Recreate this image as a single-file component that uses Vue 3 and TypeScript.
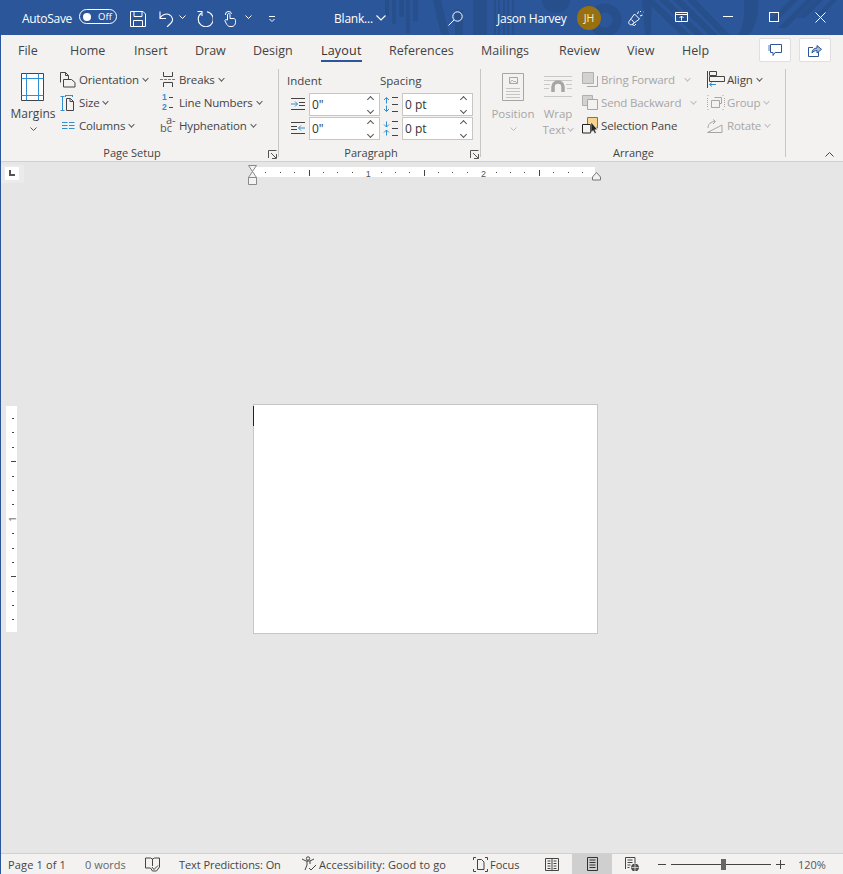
<script setup lang="ts">
const tabs = [
  { label: 'File', w: 52 }, { label: 'Home', w: 64 }, { label: 'Insert', w: 61 },
  { label: 'Draw', w: 58 }, { label: 'Design', w: 68 }, { label: 'Layout', w: 68, active: true },
  { label: 'References', w: 92 }, { label: 'Mailings', w: 78 }, { label: 'Review', w: 68 },
  { label: 'View', w: 55 }, { label: 'Help', w: 40 },
]
const vTicks = [0, 1, 2, 3, 4, 5, 6, 7, 8, 9, 10, 11, 12, 13, 14]
</script>

<template>
  <div class="app">
    <header class="title">
      <svg class="pattern" width="843" height="35" viewBox="0 0 843 35" fill="#264f8c">
        <path d="M385 0h4v16h-4zM392 0h4v24h-4zM399 0h5v17h-5zM406 0h4v33h-4zM413 0h5v21h-5z" />
        <path d="M433 0h8l8 35h-8zM455 10h8v25h-8zM473 0h14v35h-14zM494 0h2v35h-2zM498 0h2v35h-2zM503 0h2v35h-2zM507 0h2v35h-2zM512 0h2v35h-2z" />
        <path d="M542 0h28a14 13 0 0 1-28 0z" />
        <circle cx="605" cy="20" r="12" fill="none" stroke="#264f8c" stroke-width="9" />
        <path d="M642 0h10l-1 35h-6zM654 0l36 35h-9l-36-35zM668 0l36 35h-9l-36-35zM682 0l36 35h-9l-36-35zM696 0l34 35h-9l-34-35z" />
        <path d="M738 35c6-9 7-22 6-35h14c1 14-2 26-9 35z" />
        <path d="M768 22l22-22h8l-22 22zM778 28l28-28h8l-28 28zM797 18l18-18h8l-18 18zM815 16l16-16h6l-16 16z" />
      </svg>
      <span class="autosave">AutoSave</span>
      <span class="toggle"><i></i><b>Off</b></span>
      <svg class="qa save" width="16" height="16" viewBox="0 0 16 16" fill="none" stroke="#fff"><path d="M.5.500h12.500l2.500 2.500v12.500H.5zM4 .5v5h8v-5M3.500 15.500V9.500h9v6" /></svg>
      <svg class="qa undo" width="15" height="16" viewBox="0 0 15 16" fill="none" stroke="#fff" stroke-width="1.100"><path d="M1 .5v7h6M1 7c2-3 6-5 9-3.500 4 2 4.500 6 2 8.500l-4 4" /></svg>
      <svg class="chev cv-undo" width="7" height="4" viewBox="0 0 7 4" fill="none" stroke="#fff"><path d="M.5.500l3 3 3-3" /></svg>
      <svg class="qa redo" width="16" height="17" viewBox="0 0 16 17" fill="none" stroke="#fff" stroke-width="1.100"><path d="M4.500 3A7.500 7.500 0 1 0 10 1.800" /><path d="M.5 1.500h4.500V6" /></svg>
      <svg class="qa touch" width="12" height="16" viewBox="0 0 12 16" fill="none" stroke="#fff"><path d="M3.500 9V3.500a1.300 1.300 0 0 1 2.500 0v4h3a2 2 0 0 1 2.500 2v2c0 2.500-2 4-3.500 4H6c-2 0-3-1.500-4-3.500L1 10c-.5-1 1-2 2-1zM1.500 4a3 3 0 0 1 6-1" /></svg>
      <svg class="chev cv-touch" width="7" height="4" viewBox="0 0 7 4" fill="none" stroke="#fff"><path d="M.5.500l3 3 3-3" /></svg>
      <svg class="qa custom" width="6" height="6" viewBox="0 0 6 6" fill="none" stroke="#fff"><path d="M0 .5h6M.5 3l2.500 2.500L5.500 3" /></svg>
      <span class="doc">Blank...</span>
      <svg class="doc-chev" width="10" height="6" viewBox="0 0 10 6" fill="none" stroke="#fff" stroke-width="1.100"><path d="M.5.500l4.500 4.500 4.500-4.500" /></svg>
      <svg class="search" width="15" height="15" viewBox="0 0 15 15" fill="none" stroke="#fff"><circle cx="9.500" cy="5.500" r="4.700" /><path d="M6 9l-5.500 5.500" /></svg>
      <span class="user">Jason Harvey</span>
      <span class="avatar">JH</span>
      <svg class="feedback" width="16" height="16" viewBox="0 0 16 16" fill="none" stroke="#fff"><path d="M1 11.500L6.500 4l5 5-7.500 5.500c-2 1-4-1-3-3zM4 14.500l2.500 1 1.500-1.500M3.500 9.500l3 3.500M9.500 4l1-2.500M12 6l2.500-1M12.500 1v1M15 2h.5" /></svg>
      <svg class="display" width="13" height="10" viewBox="0 0 13 10" fill="none" stroke="#fff"><path d="M.5.500h12v9H.5zM.5 2.500h12M6.500 8.500V4M4.500 6l2-2 2 2" /></svg>
      <span class="ctl min"></span>
      <span class="ctl max"></span>
      <svg class="ctl-x" width="11" height="11" viewBox="0 0 11 11" fill="none" stroke="#fff"><path d="M.5.500l10 10M10.500.500l-10 10" /></svg>
    </header>

    <nav class="tabs">
      <span v-for="t in tabs" :key="t.label" class="tab" :class="{ on: t.active }" :style="{ width: t.w + 'px' }"><em>{{ t.label }}</em></span>
      <span class="spacer"></span>
      <button class="tb-btn">
        <svg width="14" height="13" viewBox="0 0 14 13" fill="none"><path d="M2.500.500h11v8H7l-2 3v-3H2.500z" stroke="#2b579a" /><path d="M0 1h2v6H0z" fill="#a9bcd8" /></svg>
      </button>
      <button class="tb-btn">
        <svg width="14" height="13" viewBox="0 0 14 13" fill="none" stroke="#2b579a"><path d="M5 3.500H.5v9h10V8" /><path d="M4 9c0-3 2-5 5-5V1.500l4.500 3.800L9 9V6.500C7 6.500 5 7.500 4 9z" fill="#a9bcd8" /></svg>
      </button>
    </nav>

    <section class="ribbon">
      <!-- Page Setup -->
      <div class="group g-page">
        <div class="body page-body">
          <div class="big margins">
            <svg width="24" height="28" viewBox="0 0 24 28" fill="none">
              <path d="M.5.500h22v27H.5z" fill="#fff" stroke="#444" />
              <path d="M.5 5.500h22M.5 22.500h22M5.500.500v27M17.500.500v27" stroke="#2e8fd4" />
            </svg>
            <span class="big-l">Margins</span>
            <svg class="c" width="7" height="4" viewBox="0 0 7 4" fill="none" stroke="#555"><path d="M.5.500l3 3 3-3" /></svg>
          </div>
          <div class="col c1">
            <div class="row"><svg width="17" height="16" viewBox="0 0 17 16" fill="none" stroke="#444"><path d="M.5 10.500V.5h5l3 3v3.500" /><path d="M5.500.500v3h3" /><path d="M3.500 7.500h8l3.500 3v4.500H3.500z" /></svg><span class="l">Orientation</span><i class="ch"></i></div>
            <div class="row"><svg width="17" height="16" viewBox="0 0 17 16" fill="none"><path d="M2.500 1v15M.5 1.500h4M.5 15.500h4M5.500 .5h7M5.500 0v2M12.500 0v2" stroke="#2e8fd4" /><path d="M6.500 3.500h4l3 3v9h-7zM10 3.500v3h3.500" stroke="#444" /></svg><span class="l">Size</span><i class="ch"></i></div>
            <div class="row"><svg width="17" height="16" viewBox="0 0 17 16" fill="none" stroke="#2e8fd4"><path d="M2 4.500h5.500M2 7.500h5.500M2 10.500h5.500M9 4.500h5.500M9 7.500h5.500M9 10.500h5.500" /></svg><span class="l">Columns</span><i class="ch"></i></div>
          </div>
          <div class="col c2">
            <div class="row"><svg width="16" height="15" viewBox="0 0 16 15" fill="none"><path d="M3.500 0v4.500h9V0M3.500 15v-4.500h9V15" stroke="#444" /><path d="M0 7.500h16" stroke="#2e8fd4" stroke-dasharray="3 1" /></svg><span class="l">Breaks</span><i class="ch"></i></div>
            <div class="row"><svg width="16" height="15" viewBox="0 0 16 15" fill="none"><path d="M9 2.500h4M9 12.500h4" stroke="#444" /></svg><span class="num"><b>1</b><b>2</b></span><span class="l">Line Numbers</span><i class="ch"></i></div>
            <div class="row"><span class="hy"><b>a-</b><b>bc</b></span><span class="l">Hyphenation</span><i class="ch"></i></div>
          </div>
        </div>
        <div class="glabel lb-page">Page Setup<svg class="launch" width="9" height="9" viewBox="0 0 9 9" fill="none" stroke="#555"><path d="M.5 8V.5h8M4 8.500h4.500V4M3 3l5 5" /></svg></div>
      </div>

      <!-- Paragraph -->
      <div class="group g-para">
        <div class="body para-body">
          <div class="para-head"><span>Indent</span><span>Spacing</span></div>
          <div class="para-row">
            <svg width="15" height="12" viewBox="0 0 15 12" fill="none"><path d="M0 .5h14M8 4.500h6M8 7.500h6M0 11.500h14" stroke="#444" /><path d="M0 6h6.500M4 3.500L6.500 6 4 8.500" stroke="#2e8fd4" /></svg>
            <span class="spin"><span class="v">0"</span><span class="arrows"><i class="up"></i><i class="dn"></i></span></span>
            <svg width="15" height="15" viewBox="0 0 15 15" fill="none"><path d="M9 .5h6M9 7.500h6M9 14.500h6" stroke="#444" /><path d="M3.500 .5v6M1 3l2.500-2.500L6 3M3.500 8.500v6M1 12l2.500 2.500L6 12" stroke="#2e8fd4" /></svg>
            <span class="spin"><span class="v">0 pt</span><span class="arrows"><i class="up"></i><i class="dn"></i></span></span>
          </div>
          <div class="para-row">
            <svg width="15" height="12" viewBox="0 0 15 12" fill="none"><path d="M0 .5h14M0 4.500h6M0 7.500h6M0 11.500h14" stroke="#444" /><path d="M14 6H7.500M10 3.500L7.500 6l2.500 2.500" stroke="#2e8fd4" /></svg>
            <span class="spin"><span class="v">0"</span><span class="arrows"><i class="up"></i><i class="dn"></i></span></span>
            <svg width="15" height="15" viewBox="0 0 15 15" fill="none"><path d="M9 .5h6M9 7.500h6M9 14.500h6" stroke="#444" /><path d="M3.500 .5v5.500M1 3.500L3.500 6 6 3.500M3.500 9v5.500M1 11.500L3.500 9 6 11.500" stroke="#2e8fd4" /></svg>
            <span class="spin"><span class="v">0 pt</span><span class="arrows"><i class="up"></i><i class="dn"></i></span></span>
          </div>
        </div>
        <div class="glabel lb-para">Paragraph<svg class="launch" width="9" height="9" viewBox="0 0 9 9" fill="none" stroke="#555"><path d="M.5 8V.5h8M4 8.500h4.500V4M3 3l5 5" /></svg></div>
      </div>

      <!-- Arrange -->
      <div class="group g-arr">
        <div class="body arr-body">
          <div class="big pos">
            <svg width="22" height="28" viewBox="0 0 22 28" fill="none" stroke="#a6a6a6"><path d="M.5.500h21v27H.5z" /><path d="M4 15.500h14M4 18.500h14M4 21.500h14M4 24.500h14" stroke="#c4c4c4" /><path d="M7.500 4.500h8v6h-8z" /><path d="M8 10l2-3 2 2 1-1 2 2" stroke-width=".8" /></svg>
            <span class="big-l dim">Position</span>
            <svg class="c" width="7" height="4" viewBox="0 0 7 4" fill="none" stroke="#bbb"><path d="M.5.500l3 3 3-3" /></svg>
          </div>
          <div class="big wrap">
            <svg width="28" height="21" viewBox="0 0 28 21" fill="none"><path d="M0 .5h28M0 4.500h28M0 8.500h6M22 8.500h6M0 12.500h5M23 12.500h5M0 20.500h28" stroke="#c8c8c8" /><path d="M9 16v-5a5 5 0 0 1 10 0v5" stroke="#a6a6a6" stroke-width="3.500" /></svg>
            <span class="big-l dim">Wrap</span>
            <span class="big-l dim t2">Text<i class="ch dimch"></i></span>
          </div>
          <div class="col c3">
            <div class="row"><svg width="16" height="15" viewBox="0 0 16 15" fill="none"><path d="M.5.500h11v11H.5z" fill="#d2d2d2" stroke="#b0b0b0" /><path d="M15.500 4v10.500H5" stroke="#a6a6a6" /></svg><span class="l dim w-fwd">Bring Forward</span><i class="ch dimch"></i></div>
            <div class="row"><svg width="16" height="15" viewBox="0 0 16 15" fill="none"><path d="M.5.500h10v10H.5z" fill="#d2d2d2" stroke="#b0b0b0" /><path d="M5.500 4.500h10v10h-10z" fill="#f3f2f1" stroke="#a6a6a6" /></svg><span class="l dim w-back">Send Backward</span><i class="ch dimch"></i></div>
            <div class="row sel"><svg width="16" height="17" viewBox="0 0 16 17" fill="none"><path d="M5.500.500h10v10.500h-10z" fill="#f9d48c" stroke="#c8600a" /><path d="M.5 7.500h8v8.500h-8z" fill="#f3f2f1" stroke="#222" /><path d="M9 5v10.500l2.200-2 1.500 3 1.600-.8-1.500-3h2.700z" fill="#222" stroke="#fff" stroke-width=".5" /></svg><span class="l">Selection Pane</span></div>
          </div>
          <div class="col c4">
            <div class="row"><svg width="18" height="17" viewBox="0 0 18 17" fill="none"><path d="M.5 0v17" stroke="#444" /><path d="M2.500.500h7v4h-7zM2.500 5.500h15v5h-15z" stroke="#444" /><path d="M9 13.500H2.500M5 11.500l-2.500 2 2.500 2" stroke="#2e8fd4" /></svg><span class="l">Align</span><i class="ch"></i></div>
            <div class="row"><svg width="18" height="15" viewBox="0 0 18 15" fill="none" stroke="#a6a6a6"><path d="M4.500 5.500h8v7h-8zM7.500 2.500h7v6h-2" /><path d="M.5.500h2M.5 3v9M15.500.500h2M.5 14.500h2M15.500 14.500h2M17.500 3v9" stroke-dasharray="1 1" /></svg><span class="l dim">Group</span><i class="ch dimch"></i></div>
            <div class="row"><svg width="18" height="14" viewBox="0 0 18 14" fill="none" stroke="#a6a6a6"><path d="M.5 13.500L15 6v7.500zM1 9c0-4 3-6.500 7-6.500M6 .5l2.500 2L6 5" /></svg><span class="l dim">Rotate</span><i class="ch dimch"></i></div>
          </div>
        </div>
        <div class="glabel">Arrange</div>
      </div>
      <div class="collapse"><svg width="9" height="5" viewBox="0 0 9 5" fill="none" stroke="#444"><path d="M.5 4.500l4-4 4 4" /></svg></div>
    </section>

    <main class="canvas">
      <div class="hruler-row">
        <span class="corner"><i></i></span>
        <div class="hruler">
          <svg class="mk-left" width="10" height="21" viewBox="0 0 10 21" fill="#f3f2f1" stroke="#8a8a8a"><path d="M.5.500h8L4.500 6.500zM4.500 6.500l4 6h-8zM.5 12.500h8v7h-8z" /></svg>
          <svg class="mk-right" width="10" height="9" viewBox="0 0 10 9" fill="#f3f2f1" stroke="#777"><path d="M4.500.5l4 4.500v3h-8V5z" /></svg>
          <div class="marks">
            <span v-for="n in 23" :key="n" class="tick" :class="{ mid: n % 8 === 4, num: n % 8 === 0 }">{{ n % 8 === 0 ? n / 8 : '' }}</span>
          </div>
        </div>
      </div>
      <div class="work">
        <div class="vruler">
          <span v-for="n in vTicks" :key="n" class="vt" :class="{ mid: n === 3 || n === 11, one: n === 7 }"><b v-if="n === 7">1</b></span>
        </div>
        <div class="page"><span class="caret"></span></div>
      </div>
    </main>

    <footer class="status">
      <span class="st s1">Page 1 of 1</span>
      <span class="st s2">0 words</span>
      <svg class="s-book" width="15" height="15" viewBox="0 0 15 15" fill="none" stroke="#444"><path d="M.5 1h5l2 1 2-1h5v9l-3 4H7.500L5.500 11H.5zM7.500 2v7M7 10l2 2.500 4-4" /></svg>
      <span class="st s3">Text Predictions: On</span>
      <svg class="s-acc" width="16" height="16" viewBox="0 0 16 16" fill="none" stroke="#444"><circle cx="7" cy="2.500" r="1.700" /><path d="M1 3l4 2h4l4-2M6 5v4l-2 5M9 5v3M8 12l2 2 5-5" /></svg>
      <span class="st s4">Accessibility: Good to go</span>
      <svg class="s-focus" width="15" height="15" viewBox="0 0 15 15" fill="none" stroke="#444"><path d="M.5 3V.5H3M12 .5h2.500V3M.5 12v2.500H3M12 14.500h2.500V12M4.500 12.500v-10h4l2.500 2.500v7.500z" /></svg>
      <span class="st s5">Focus</span>
      <svg class="s-read" width="14" height="13" viewBox="0 0 14 13" fill="none" stroke="#444"><path d="M.5.500h13v12H.5zM7 .5v12M2.500 3h3M2.500 5.500h3M2.500 8h3M2.500 10.500h3M8.500 3h3M8.500 5.500h3M8.500 8h3M8.500 10.500h3" /></svg>
      <span class="s-print"><svg width="11" height="14" viewBox="0 0 11 14" fill="none" stroke="#333"><path d="M.5.500h10v13H.5zM2.500 3h6M2.500 5.500h6M2.500 8h6M2.500 10.500h6" /></svg></span>
      <svg class="s-web" width="14" height="14" viewBox="0 0 14 14" fill="none" stroke="#444"><path d="M.5 12V.5h9.500V6M2.500 3h5M2.500 5.500h5M2.500 8h3M2.500 10.500h2" /><circle cx="10" cy="10.500" r="3.500" fill="#555" /><path d="M6.500 10.500h7M10 7v7" stroke="#f3f2f1" stroke-width=".7" /></svg>
      <span class="z-minus"></span>
      <span class="z-track"><span class="z-thumb"></span></span>
      <span class="z-plus"></span>
      <span class="st zoom-v">120%</span>
    </footer>
  </div>
</template>

<style>
html, body { margin: 0; padding: 0; }
</style>

<style scoped>
.app {
  width: 843px;
  height: 874px;
  box-sizing: border-box;
  border-left: 1px solid #2b579a;
  display: flex;
  flex-direction: column;
  overflow: hidden;
  font-family: "Open Sans", "Noto Sans", sans-serif;
  color: #444;
  background: #e6e6e6;
}
.title {
  position: relative;
  margin-left: -1px;
  height: 35px;
  flex: none;
  background: #2b579a;
  color: #fff;
  display: flex;
  align-items: center;
  font-size: 12px;
}
.pattern { position: absolute; left: 0; top: 0; }
.title > *:not(.pattern) { position: relative; flex: none; }
.autosave { margin: 1px 0 0 22px; width: 57px; letter-spacing: -.3px; }
.toggle {
  width: 36px; height: 13px; border: 1px solid #fff; border-radius: 8px;
  display: flex; align-items: center; font-size: 9.500px; margin-top: -2px;
}
.toggle i { width: 8px; height: 8px; border-radius: 50%; background: #fff; margin-left: 3px; }
.toggle b { font-weight: 400; margin-left: 7px; }
.save { margin-left: 13px; margin-top: 3px; }
.undo { margin-left: 13px; margin-top: 2px; }
.cv-undo { margin-left: 5px; margin-top: -2px; }
.redo { margin-left: 11px; margin-top: 2px; }
.touch { margin-left: 11px; margin-top: 3px; }
.cv-touch { margin-left: 9px; margin-top: -2px; }
.custom { margin-left: 17px; margin-top: 2px; }
.doc { margin: 1px 0 0 59px; width: 38px; white-space: nowrap; letter-spacing: -.2px; }
.doc-chev { margin-left: 4px; }
.search { margin-left: 62px; margin-top: 1px; }
.user { margin: 1px 0 0 34px; width: 69px; white-space: nowrap; letter-spacing: -.25px; }
.avatar {
  margin: 1px 0 0 11px; width: 24px; height: 24px; border-radius: 50%; background: #987010;
  display: flex; align-items: center; justify-content: center; font-size: 10.500px; color: #f7ecd0;
}
.feedback { margin-left: 27px; margin-top: 1px; }
.display { margin-left: 31px; margin-top: -1px; }
.ctl.min { margin-left: 35px; width: 10px; height: 1px; background: #fff; margin-top: -2px; }
.ctl.max { margin-left: 36px; width: 8px; height: 8px; border: 1px solid #fff; margin-top: -1px; }
.ctl-x { margin-left: 36px; margin-top: -1px; }

.tabs {
  height: 31px;
  flex: none;
  background: #f3f2f1;
  display: flex;
  align-items: flex-start;
  font-size: 12.500px;
  padding-left: 17px;
}
.tab { flex: none; height: 31px; box-sizing: border-box; padding-top: 7px; line-height: 17px; white-space: nowrap; color: #444; }
.tab em { font-style: normal; display: inline-block; position: relative; }
.tab.on em { color: #333; font-weight: 500; letter-spacing: .2px; }
.tab.on em::after { content: ""; position: absolute; left: 0; right: 0; top: 18px; height: 2px; background: #2b579a; }
.spacer { flex: 1; }
.tb-btn {
  width: 32px; height: 24px; background: #fff; border: 1px solid #e1dfdd; border-radius: 2px;
  margin: 3px 0 0 8px; padding: 0; display: flex; align-items: center; justify-content: center;
}
.tb-btn:last-child { margin-right: 12px; }

.ribbon {
  flex: none;
  height: 96px;
  box-sizing: border-box;
  background: #f3f2f1;
  border-bottom: 1px solid #d2d0ce;
  display: flex;
  font-size: 11.500px;
  position: relative;
}
.group { display: flex; flex-direction: column; position: relative; box-sizing: border-box; flex: none; }
.group::after { content: ""; position: absolute; right: 0; top: 3px; bottom: 4px; width: 1px; background: #c8c6c4; }
.g-page { width: 278px; }
.g-para { width: 202px; }
.g-arr { width: 305px; }
.body { flex: 1; display: flex; position: relative; }
.glabel { height: 16px; text-align: center; line-height: 16px; position: relative; font-size: 11px; color: #444; }
.lb-page { padding-right: 16px; }
.lb-para { padding-right: 18px; }
.launch { position: absolute; right: 2px; top: 5px; }

.big { display: flex; flex-direction: column; align-items: center; flex: none; }
.big-l { line-height: 17px; white-space: nowrap; }
.big .c { margin-top: 5px; }
.margins { width: 44px; margin-left: 10px; padding-top: 7px; }
.margins .big-l { margin-top: 4px; font-size: 12px; }
.col { display: flex; flex-direction: column; padding-top: 2px; flex: none; }
.row { height: 23px; display: flex; align-items: center; white-space: nowrap; position: relative; }
.row > svg:first-child { flex: none; margin-right: 3px; }
.l { letter-spacing: -.15px; }
.ch { display: inline-block; width: 4px; height: 4px; border-right: 1px solid #555; border-bottom: 1px solid #555; transform: rotate(45deg) scale(.9); margin: -3px 0 0 4px; flex: none; }
.dim { color: #a6a6a6; }
.dimch { border-color: #bbb; }
.c1 { width: 100px; margin-left: 5px; }
.c1 .row > svg:first-child { margin-right: 2px; }
.num { position: absolute; left: 2px; top: 2px; display: flex; flex-direction: column; color: #2e8fd4; font-family: "Liberation Sans", sans-serif; font-size: 8.500px; line-height: 9.800px; }
.num b { font-weight: 700; }
.hy { width: 16px; margin-right: 3px; margin-top: -3px; display: flex; flex-direction: column; font-size: 11px; line-height: 8px; color: #555; }
.hy b { font-weight: 400; }
.hy b:first-child { margin-left: 6px; }

.para-body { display: block; padding-left: 8px; }
.para-head { display: flex; height: 20px; padding-top: 7px; line-height: 16px; }
.para-head span:first-child { width: 93px; }
.para-row { display: flex; align-items: flex-start; height: 24px; }
.para-row > svg { flex: none; margin-top: 5px; }
.para-row > svg:nth-of-type(1) { margin-left: 4px; margin-right: 3px; }
.para-row > svg:nth-of-type(2) { margin-left: 3px; margin-right: 4px; margin-top: 4px; }
.spin {
  width: 69px; height: 21px; border: 1px solid #c8c6c4; background: #fff;
  display: flex; justify-content: space-between; align-items: center;
}
.v { margin-left: 2px; color: #333; font-size: 12px; }
.arrows { display: flex; flex-direction: column; gap: 6px; margin-right: 6px; }
.arrows i { width: 4px; height: 4px; border-left: 1px solid #555; border-top: 1px solid #555; display: block; }
.up { transform: rotate(45deg); }
.dn { transform: rotate(225deg); }

.pos { width: 44px; margin-left: 10px; padding-top: 7px; }
.pos .big-l { margin-top: 4px; }
.wrap { width: 44px; margin-left: 1px; padding-top: 10px; }
.wrap .big-l { margin-top: 8px; }
.wrap .t2 { margin-top: -1px; display: flex; align-items: center; }
.t2 .ch { margin: -2px 0 0 3px; }
.c3 { width: 125px; margin-left: 2px; }
.w-fwd { width: 80px; }
.w-back { width: 86px; }
.c4 .row > svg:first-child { margin-right: 2px; }
.collapse { position: absolute; right: 9px; bottom: 4px; width: 9px; height: 5px; display: flex; }

.canvas { flex: 1; display: flex; flex-direction: column; min-height: 0; }
.hruler-row { height: 20px; display: flex; flex: none; }
.corner { margin-top: 3px; width: 23px; height: 18px; background: #ebebeb; padding: 2px 4px; box-sizing: border-box; display: flex; align-items: flex-start; flex: none; }
.corner i { width: 14px; height: 13px; background: #fff; display: block; position: relative; }
.corner i::after { content: ""; position: absolute; left: 4px; top: 3px; width: 6px; height: 6px; border-left: 2px solid #555; border-bottom: 2px solid #555; box-sizing: border-box; }
.hruler { position: relative; margin-left: 229px; margin-top: 5px; width: 342px; height: 10px; background: #fff; }
.marks { display: flex; height: 10px; padding-left: 5.400px; }
.tick { width: 14.400px; flex: none; height: 10px; position: relative; text-align: center; font-size: 9px; line-height: 10px; color: #555; }
.tick::after { content: ""; position: absolute; left: 7px; top: 5px; width: 1px; height: 1px; background: #444; }
.tick.mid::after { top: 3px; height: 6px; }
.tick.num::after { display: none; }
.mk-left { position: absolute; left: -5px; top: -2px; z-index: 1; }
.mk-right { position: absolute; right: -7px; top: 5px; z-index: 1; }

.work { flex: 1; display: flex; align-items: flex-start; position: relative; }
.vruler { margin-top: 224px; margin-left: 5px; width: 11px; height: 226px; background: #fff; display: flex; flex-direction: column; padding-top: 12px; box-sizing: border-box; flex: none; }
.vt { height: 14.400px; flex: none; position: relative; }
.vt::after { content: ""; position: absolute; left: 6px; top: 0; width: 2px; height: 1px; background: #444; }
.vt.mid::after { left: 5px; width: 5px; }
.vt.one::after { display: none; }
.vt b { position: absolute; left: 3px; top: -6px; width: 7px; height: 12px; font-weight: 400; font-size: 8.500px; line-height: 12px; text-align: center; color: #444; transform: rotate(-90deg); }
.page { margin-top: 222px; margin-left: 236px; width: 343px; height: 228px; background: #fff; border: 1px solid #c8c6c4; position: relative; flex: none; }
.caret { position: absolute; left: -1px; top: 1px; width: 1px; height: 20px; background: #222; }

.status {
  height: 21px; flex: none; background: #f3f2f1; border-top: 1px solid #d2d0ce; box-sizing: border-box;
  display: flex; align-items: center; font-size: 11px; color: #444; position: relative;
}
.status > * { flex: none; }
.st { white-space: nowrap; }
.s1 { margin-left: 7px; width: 77px; letter-spacing: .15px; }
.s2 { width: 60px; color: #666; }
.s-book { margin-right: 19px; }
.s3 { width: 122px; letter-spacing: -.07px; }
.s-acc { margin-right: 2px; }
.s4 { width: 154px; letter-spacing: .12px; }
.s-focus { margin-right: 2px; }
.s5 { width: 55px; }
.s-read { margin-right: 13px; }
.s-print { width: 40px; height: 20px; background: #cfcfcf; display: flex; align-items: center; justify-content: center; }
.s-web { margin-left: 13px; }
.z-minus { margin-left: 19px; width: 8px; height: 1px; background: #444; }
.z-track { margin-left: 5px; width: 100px; height: 1px; background: #444; position: relative; }
.z-thumb { position: absolute; left: 50px; top: -5px; width: 5px; height: 11px; background: #666; }
.z-plus { margin-left: 5px; width: 9px; height: 9px; background: linear-gradient(#444,#444) 0 4px/9px 1px no-repeat, linear-gradient(#444,#444) 4px 0/1px 9px no-repeat; }
.zoom-v { margin-left: 13px; color: #555; }
</style>
